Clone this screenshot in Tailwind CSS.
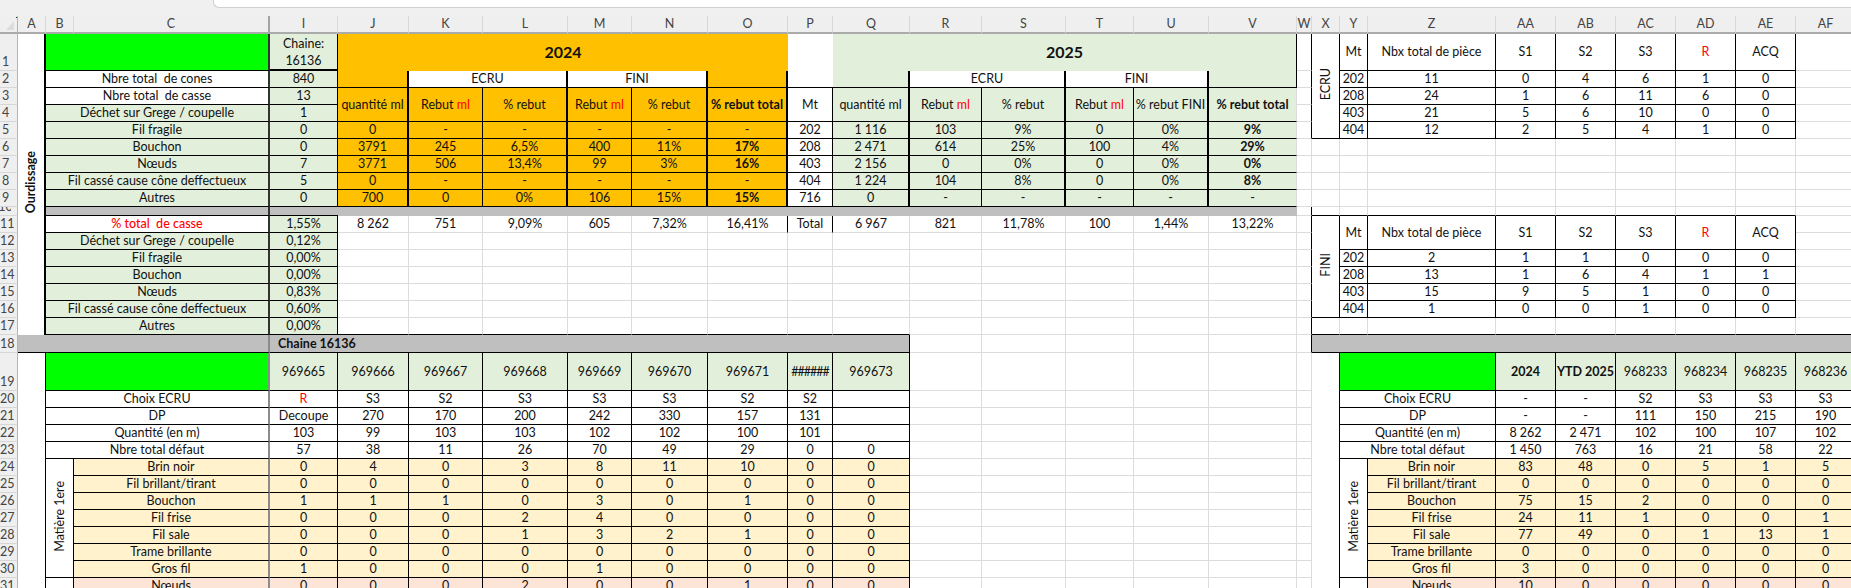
<!DOCTYPE html>
<html lang="fr">
<head>
    <meta charset="UTF-8">
    <title>Ourdissage</title>
    <script src="https://cdn.jsdelivr.net/npm/@tailwindcss/browser@4"></script>
</head>
<body class="w-[1851px] h-[588px] overflow-hidden bg-white font-['Lato',sans-serif] text-[12.5px] leading-[16px] text-[#111]">
    <div class="h-[16px] bg-[#f0f0f0]">
        <div class="ml-[213px] h-[8px] bg-white border-l border-b border-[#d0d0d0] rounded-bl-[6px]"></div>
    </div>
    <table class="table-fixed border-separate border-spacing-0 w-[1856px]">
        <colgroup id="cols"></colgroup>
        <tbody id="sheet"></tbody>
    </table>
    <script>
        // column widths: header, A, B, C, I ... AF (D-H are hidden)
        const widths = ['w-[18px]','w-[28px]','w-[28px]','w-[196px]','w-[68px]','w-[71px]','w-[74px]','w-[85px]','w-[64px]','w-[76px]','w-[80px]','w-[45px]','w-[77px]','w-[72px]','w-[84px]','w-[68px]','w-[75px]','w-[88px]','w-[15px]','w-[28px]','w-[28px]','w-[128px]','w-[60px]','w-[60px]','w-[60px]','w-[60px]','w-[60px]','w-[60px]'];
        document.getElementById('cols').innerHTML = widths.map(w => `<col class="${w}">`).join('');

        const rGrid = 'border-r border-r-[#dcdcdc]', rBlack = 'border-r border-r-black', rThick = 'border-r-2 border-r-black',
              rDark = 'border-r-2 border-r-[#333333]', rGrey = 'border-r-2 border-r-[#8c8c8c]', rNone = 'border-r-0';
        const bGrid = 'border-b border-b-[#dcdcdc]', bBlack = 'border-b border-b-black', bThick = 'border-b-2 border-b-black', bNone = 'border-b-0';
        const green = 'bg-[#00ff00]', pale = 'bg-[#e2efda]', orange = 'bg-[#ffc000]', cream = 'bg-[#fff2cc]', rose = 'bg-[#fce4d6]', grey = 'bg-[#bfbfbf]';
        const red = t => `<span class="text-[#ff0000]">${t}</span>`;
        const bold = t => `<b class="font-bold">${t}</b>`;
        const vert = (t, c = '') => `<span class="inline-block [writing-mode:vertical-rl] rotate-180 ${c}">${t}</span>`;

        function c(text, fill, r, b, attrs = '', extra = 'text-center') {
            return `<td ${attrs} class="p-0 align-middle whitespace-nowrap overflow-hidden ${extra} ${fill} ${r} ${b}">${text}</td>`;
        }
        const blank = (n = 1) => c('', '', rGrid, bGrid).repeat(n);
        const row = (cls, n, cells) => `<tr class="${cls}"><td class="p-0 pr-[6px] align-bottom text-center bg-[#efefef] text-[#444] overflow-hidden border-r border-r-[#b4b4b4] border-b border-b-[#d6d6d6]">${n}</td>${cells}</tr>`;

        let html = '';

        // column letters
        const letters = ['A','B','C','I','J','K','L','M','N','O','P','Q','R','S','T','U','V','W','X','Y','Z','AA','AB','AC','AD','AE','AF'];
        html += `<tr class="h-[17px]"><td class="p-0 bg-[#efefef] border-b-2 border-b-[#ababab] border-r border-r-[#b4b4b4]"><svg class="block" width="17" height="15" viewBox="0 0 17 15"><path d="M6 13 14 4v9z" fill="#dcdcdc"/><rect x="16" width="1" height="1" fill="#222"/></svg></td>`
            + letters.map(l => `<td class="p-0 text-center bg-[#efefef] text-[#444] border-b-2 border-b-[#ababab] ${l === 'C' ? 'border-r-2 border-r-[#a4a4a4]' : 'border-r border-r-[#d8d8d8]'}">${l}</td>`).join('') + '</tr>';

        // right hand summary tables, rows 1-17
        const tableHead = (attrs) => c('Mt', '', rBlack, bBlack, attrs) + c('Nbx total de pièce', '', rBlack, bBlack, attrs)
            + ['S1', 'S2', 'S3', red('R'), 'ACQ'].map(t => c(t, '', rBlack, bBlack, attrs)).join('');
        const tableRow = v => v.map(t => c(t, '', rBlack, bBlack)).join('');
        const ecru = [['202',11,0,4,6,1,0],['208',24,1,6,11,6,0],['403',21,5,6,10,0,0],['404',12,2,5,4,1,0]];
        const fini = [['202',2,1,1,0,0,0],['208',13,1,6,4,1,1],['403',15,9,5,1,0,0],['404',1,0,0,1,0,0]];

        // row 1
        html += row('h-[37px]', 1,
            c(vert('Ourdissage', 'font-bold'), '', rThick, bNone, 'rowspan="17"')
            + c('', green, rDark, bBlack, 'colspan="2"')
            + c('Chaine:<br>16136', pale, rBlack, bThick, '', 'text-center leading-[17px]')
            + c(bold('<span class="text-[16px]">2024</span>'), orange, rNone, bNone, 'colspan="6"')
            + c('', '', rNone, bBlack, 'rowspan="2"')
            + c(bold('<span class="text-[16px]">2025</span>'), pale, rBlack, bNone, 'colspan="6"')
            + c('', '', rBlack, bGrid)
            + c(vert('ECRU'), '', rBlack, bBlack, 'rowspan="5"')
            + tableHead('') + blank());

        // row 2
        html += row('h-[17px]', 2,
            c('Nbre total&nbsp; de cones', '', rDark, bBlack, 'colspan="2"')
            + c('840', pale, rBlack, bBlack)
            + c('', orange, rThick, bBlack)
            + c('ECRU', '', rThick, bBlack, 'colspan="2"')
            + c('FINI', '', rThick, bBlack, 'colspan="2"')
            + c('', orange, rThick, bBlack)
            + c('', pale, rThick, bBlack)
            + c('ECRU', '', rThick, bBlack, 'colspan="2"')
            + c('FINI', '', rThick, bBlack, 'colspan="2"')
            + c('', pale, rBlack, bBlack)
            + c('', '', rBlack, bGrid)
            + tableRow(ecru[0]) + blank());

        // row 3, merged with 4 for the year headers
        const rebut = `Rebut ${red('ml')}`, two = 'rowspan="2"';
        html += row('h-[17px]', 3,
            c('Nbre total&nbsp; de casse', '', rDark, bBlack, 'colspan="2"')
            + c('13', pale, rBlack, bBlack)
            + c('quantité ml', orange, rThick, bBlack, two) + c(rebut, orange, rBlack, bBlack, two) + c('% rebut', orange, rThick, bBlack, two)
            + c(rebut, orange, rBlack, bBlack, two) + c('% rebut', orange, rThick, bBlack, two) + c(bold('% rebut total'), orange, rThick, bBlack, two)
            + c('Mt', '', rBlack, bBlack, two)
            + c('quantité ml', pale, rThick, bBlack, two) + c(rebut, pale, rBlack, bBlack, two) + c('% rebut', pale, rThick, bBlack, two)
            + c(rebut, pale, rBlack, bBlack, two) + c('% rebut FINI', pale, rThick, bBlack, two) + c(bold('% rebut total'), pale, rGrid, bBlack, two)
            + c('', '', rBlack, bGrid) + tableRow(ecru[1]) + blank());
        html += row('h-[17px]', 4,
            c('Déchet sur Grege / coupelle', pale, rDark, bBlack, 'colspan="2"') + c('1', pale, rBlack, bBlack)
            + c('', '', rBlack, bGrid) + tableRow(ecru[2]) + blank());

        // rows 5-9
        const labels = ['Fil fragile', 'Bouchon', 'Nœuds', 'Fil cassé cause cône deffectueux', 'Autres'];
        const chaine = ['0', '0', '7', '5', '0'];
        const data = [
            ['0','-','-','-','-','-','202','1 116','103','9%','0','0%','9%'],
            ['3791','245','6,5%','400','11%','17%','208','2 471','614','25%','100','4%','29%'],
            ['3771','506','13,4%','99','3%','16%','403','2 156','0','0%','0','0%','0%'],
            ['0','-','-','-','-','-','404','1 224','104','8%','0','0%','8%'],
            ['700','0','0%','106','15%','15%','716','0','-','-','-','-','-'],
        ];
        const upperRight = [rThick, rBlack, rThick, rBlack, rThick, rThick, rBlack, rThick, rBlack, rThick, rBlack, rThick, rGrid];
        data.forEach((d, i) => {
            const cells = d.map((t, j) => {
                const fill = j < 6 ? orange : j === 6 ? '' : pale;
                return c((j === 5 || j === 12) && t !== '-' ? bold(t) : t, fill, upperRight[j], bBlack);
            }).join('');
            const side = i === 0 ? c('', '', rBlack, bGrid) + tableRow(ecru[3]) + blank()
                : c('', '', rGrid, bGrid) + blank(9);
            html += row('h-[17px]', i + 5, c(labels[i], pale, rDark, bBlack, 'colspan="2"') + c(chaine[i], pale, rBlack, bBlack) + cells + side);
        });

        // row 10, the grey separator
        html += row('h-[9px]', '<div class="h-[8px] flex items-end justify-center overflow-hidden">10</div>',
            c('', grey, rDark, bBlack, 'colspan="2"') + c('', grey, rNone, bBlack)
            + c('', grey, rNone, bNone, 'colspan="13"')
            + c('', '', rBlack, bGrid)
            + c('', '', rGrid, bBlack).repeat(8) + blank());

        // rows 11-17
        const totals = ['8 262','751','9,09%','605','7,32%','16,41%','Total','6 967','821','11,78%','100','1,44%','13,22%'];
        const pcts = ['1,55%','0,12%','0,00%','0,00%','0,83%','0,60%','0,00%'];
        const lower = [red('<span class="font-medium">% total&nbsp; de casse</span>'),'Déchet sur Grege / coupelle','Fil fragile','Bouchon','Nœuds','Fil cassé cause cône deffectueux','Autres'];
        lower.forEach((t, i) => {
            const last = i === 6;
            let cells = '';
            if (i === 0) {
                cells = totals.map((v, j) => c(v, '', j === 5 || j === 6 ? rBlack : rGrid, bGrid)).join('');
            } else if (last) {
                cells = c('', '', rGrid, bBlack).repeat(8) + blank(5);
            } else {
                cells = blank(13);
            }
            let side;
            if (last) side = c('', '', rBlack, bGrid) + c('', '', rGrid, bBlack).repeat(9);
            else if (i === 0) side = c('', '', rBlack, bGrid) + c(vert('FINI'), '', rBlack, bBlack, 'rowspan="6"') + tableHead(two) + blank();
            else if (i === 1) side = c('', '', rBlack, bGrid) + blank();
            else side = c('', '', rBlack, bGrid) + tableRow(fini[i - 2]) + blank();
            html += row('h-[17px]', i + 11, c(t, i === 0 ? '' : pale, rDark, bBlack, 'colspan="2"') + c(pcts[i], pale, rBlack, bBlack) + cells + side);
        });

        // row 18, grey bands
        html += row('h-[18px]', 18,
            c('', grey, rGrey, bBlack, 'colspan="3"')
            + c(bold('Chaine 16136'), grey, rBlack, bBlack, 'colspan="9"', 'text-left pl-[8px]')
            + blank(5)
            + c('', '', rBlack, bGrid)
            + c('', grey, rNone, bBlack, 'colspan="9"'));

        // rows 19-31, the two detail tables
        const names = ['Choix ECRU','DP','Quantité (en m)','Nbre total défaut','Brin noir','Fil brillant/tirant','Bouchon','Fil frise','Fil sale','Trame brillante','Gros fil','Nœuds'];
        const left = [
            [red('R'),'S3','S2','S3','S3','S3','S2','S2',''],
            ['Decoupe','270','170','200','242','330','157','131',''],
            ['103','99','103','103','102','102','100','101',''],
            ['57','38','11','26','70','49','29','0','0'],
            ['0','4','0','3','8','11','10','0','0'],
            ['0','0','0','0','0','0','0','0','0'],
            ['1','1','1','0','3','0','1','0','0'],
            ['0','0','0','2','4','0','0','0','0'],
            ['0','0','0','1','3','2','1','0','0'],
            ['0','0','0','0','0','0','0','0','0'],
            ['1','0','0','0','1','0','0','0','0'],
            ['0','0','0','2','0','0','1','0','0'],
        ];
        const right = [
            ['-','-','S2','S3','S3','S3'],
            ['-','-','111','150','215','190'],
            ['8 262','2 471','102','100','107','102'],
            ['1 450','763','16','21','58','22'],
            ['83','48','0','5','1','5'],
            ['0','0','0','0','0','0'],
            ['75','15','2','0','0','0'],
            ['24','11','1','0','0','1'],
            ['77','49','0','1','13','1'],
            ['0','0','0','0','0','0'],
            ['3','0','0','0','0','0'],
            ['10','0','0','0','0','0'],
        ];
        html += row('h-[38px]', 19,
            c('', '', rBlack, bNone, 'rowspan="13"')
            + c('', green, rGrey, bBlack, 'colspan="2"')
            + ['969665','969666','969667','969668','969669','969670','969671','<span class="tracking-[-1px]">######</span>','969673'].map(t => c(t, pale, rBlack, bBlack)).join('')
            + blank(5) + blank()
            + c('', '', rBlack, bNone, 'rowspan="13"')
            + c('', green, rBlack, bBlack, 'colspan="2"')
            + [bold('2024'), bold('YTD 2025'), '968233', '968234', '968235', '968236'].map(t => c(t, pale, rBlack, bBlack)).join(''));

        names.forEach((name, i) => {
            const fill = i < 4 ? '' : i < 11 ? cream : rose;
            let head, sideHead;
            if (i < 4) {
                head = c(name, '', rGrey, bBlack, 'colspan="2"');
                sideHead = c(name, '', rBlack, bBlack, 'colspan="2"');
            } else if (i === 4) {
                head = c(vert('Matière 1ere'), '', rBlack, bBlack, 'rowspan="7"') + c(name, fill, rGrey, bBlack);
                sideHead = c(vert('Matière 1ere'), '', rBlack, bBlack, 'rowspan="7"') + c(name, fill, rBlack, bBlack);
            } else if (i === 11) {
                head = c('', '', rBlack, bNone) + c(name, fill, rGrey, bBlack);
                sideHead = c('', '', rBlack, bNone) + c(name, fill, rBlack, bBlack);
            } else {
                head = c(name, fill, rGrey, bBlack);
                sideHead = c(name, fill, rBlack, bBlack);
            }
            html += row('h-[17px]', i + 20,
                head + left[i].map(t => c(t, fill, rBlack, bBlack)).join('')
                + blank(6)
                + sideHead + right[i].map(t => c(t, fill, rBlack, bBlack)).join(''));
        });

        document.getElementById('sheet').innerHTML = html;
    </script>
</body>
</html>
